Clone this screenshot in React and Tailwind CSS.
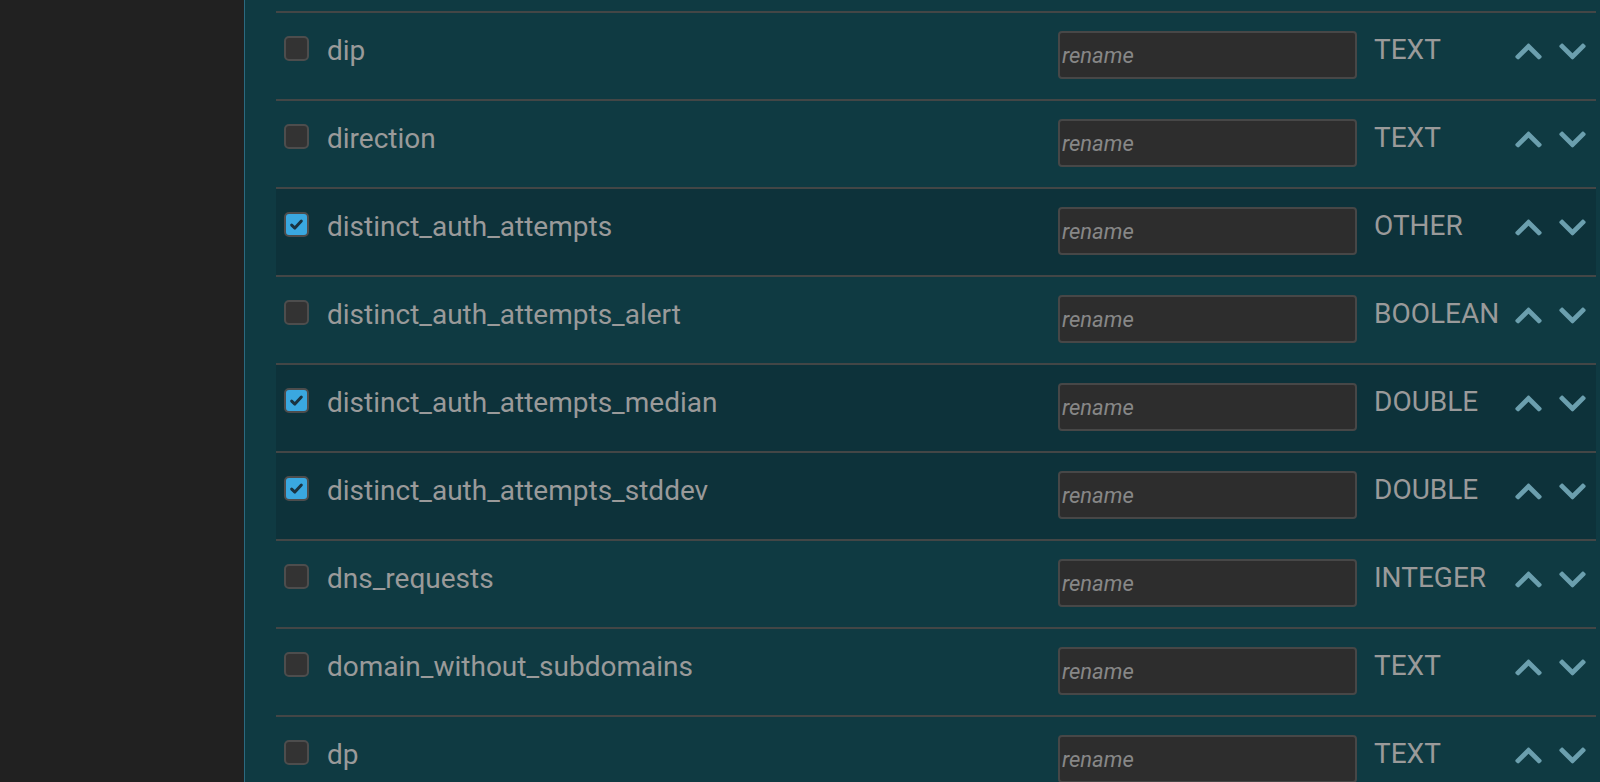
import React from 'react';
import { FaChevronUp, FaChevronDown } from 'react-icons/fa';

const fields = [
  { name: 'dip', type: 'TEXT', checked: false },
  { name: 'direction', type: 'TEXT', checked: false },
  { name: 'distinct_auth_attempts', type: 'OTHER', checked: true },
  { name: 'distinct_auth_attempts_alert', type: 'BOOLEAN', checked: false },
  { name: 'distinct_auth_attempts_median', type: 'DOUBLE', checked: true },
  { name: 'distinct_auth_attempts_stddev', type: 'DOUBLE', checked: true },
  { name: 'dns_requests', type: 'INTEGER', checked: false },
  { name: 'domain_without_subdomains', type: 'TEXT', checked: false },
  { name: 'dp', type: 'TEXT', checked: false },
];

const Checkbox = ({ checked }) => (
  <div
    className={
      'w-[25px] h-[25px] rounded-[5px] border-2 border-[#4d4d4d] flex items-center justify-center ' +
      (checked ? 'bg-[#3aa8e0]' : 'bg-[#333333]')
    }
  >
    {checked && (
      <svg width="15" height="15" viewBox="0 0 14 14">
        <path d="M2.5 7.5 L5.5 10.3 L11.5 3.8" fill="none" stroke="#1a3340" strokeWidth="2.8" strokeLinecap="round" strokeLinejoin="round" />
      </svg>
    )}
  </div>
);

const FieldRow = ({ field }) => (
  <div
    className={
      'h-[88px] border-t-2 border-[#434646] flex items-start ' +
      (field.checked ? 'bg-[#0d323a]' : '')
    }
  >
    <div className="pl-2 pt-[23px]">
      <Checkbox checked={field.checked} />
    </div>
    <div className="pl-[18px] pt-[22px] flex-1 text-[28px] leading-[32px] text-[#9a9a9a]">{field.name}</div>
    <div className="pt-[18px]">
      <input
        className="w-[299px] h-[48px] bg-[#2d2d2d] border-2 border-[#474747] rounded-[4px] pl-[2px] text-[22px] italic text-[#9a9a9a] placeholder-[#878787] outline-none"
        placeholder="rename"
      />
    </div>
    <div className="w-[156px] pl-[17px] pt-[21px] text-[28px] text-[#9a9a9a] leading-[32px]">{field.type}</div>
    <div className="flex gap-[13px] pt-[23px] text-[#6b9fae]">
      <FaChevronUp size={31} />
      <FaChevronDown size={31} />
    </div>
    <div className="w-[8px]" />
  </div>
);

export default function App() {
  return (
    <div className="w-[1600px] h-[782px] flex overflow-hidden font-['Roboto',sans-serif]">
      <div className="w-[244px] bg-[#212121] shrink-0" />
      <div className="w-px bg-[#2c6a80] shrink-0" />
      <div className="flex-1 bg-[#0f3a42] pl-[31px] pr-[4px]">
        <div className="h-[11px]" />
        {fields.map((f) => (
          <FieldRow key={f.name} field={f} />
        ))}
      </div>
    </div>
  );
}
